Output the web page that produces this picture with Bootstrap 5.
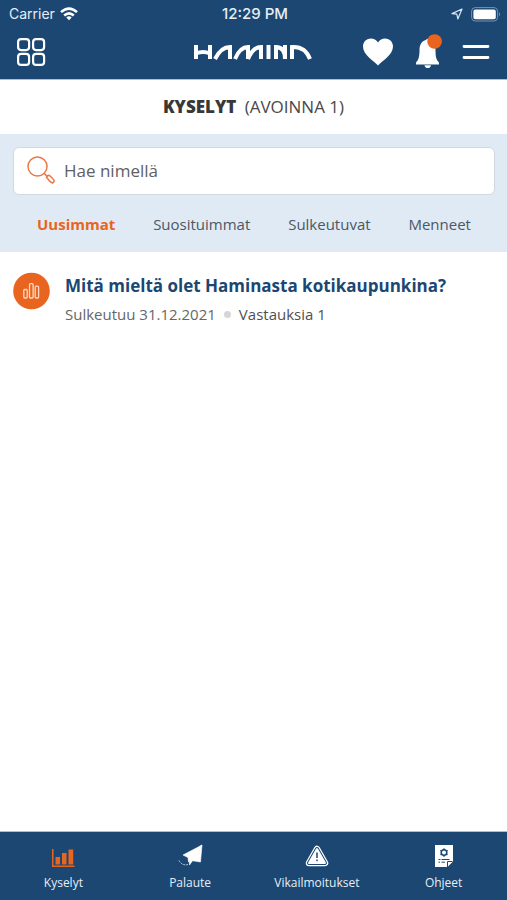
<!DOCTYPE html>
<html lang="fi">
<head>
<meta charset="utf-8">
<meta name="viewport" content="width=device-width, initial-scale=1">
<title>Kyselyt – Hamina</title>
<link href="https://cdn.jsdelivr.net/npm/bootstrap@5.3.0/dist/css/bootstrap.min.css" rel="stylesheet">
<style>
  :root { --navy: #1b4772; --accent: #e8641f; --pale: #e0eaf4; }
  body { font-family: "Open Sans", "Noto Sans", sans-serif; color: #444; }
  svg { display: block; }
  .app-head, .app-tabs { background: var(--navy); color: #fff; }
  .app-head { border-bottom: 1px solid #a9c0d8; }
  .status { font: 14px/20px Inter, Roboto, sans-serif; padding: 4px 6px 0 9px; color: #e6eef6; }
  .status .clock { font-size: 15px; font-weight: 500; }
  .side { flex: 1 1 0; }
  .brandbar { height: 55px; padding: 0 17px 0 16px; }
  .tools { gap: 20px; }
  .page-title { font-size: 17px; line-height: 24px; padding: 15px 0 15px; margin: 0; font-weight: 400; color: #484848; }
  .page-title strong { font-weight: 800; color: #383838; margin-right: 4px; }
  .filters { background: var(--pale); padding: 13px 12px 15px 13px; }
  .search { background: #fff; border: 1px solid #d3d8de; border-radius: 6px; height: 48px; padding: 0 12px; }
  .search input { font-size: 17px; line-height: 24px; color: #555; }
  .search input::placeholder { color: #606060; opacity: 1; }
  .sorts { margin-top: 16px; padding: 0 24px; }
  .sorts button { font-size: 15px; line-height: 26px; color: #4b5765; }
  .sorts .active { color: var(--accent); font-weight: 700; }
  .survey { padding: 20px 13px; gap: 15px; }
  .survey h2 { font-size: 17px; line-height: 28px; margin: 0 0 2px; font-weight: 700; }
  .survey h2 a { color: var(--navy); }
  .meta { font-size: 15px; line-height: 24px; gap: 8px; color: #666; }
  .meta .count { color: #505050; }
  .sep { width: 7px; height: 7px; border-radius: 50%; background: #d6d6d6; }
  .app-tabs { border-top: 1px solid #a9c0d8; padding: 11px 0 7px; }
  .app-tabs a { font-size: 12px; line-height: 20px; color: #e6eef6; gap: 4px; }
</style>
</head>
<body class="min-vh-100 d-flex flex-column bg-white">
<header class="app-head">
  <div class="status d-flex align-items-center">
    <div class="side d-flex align-items-center gap-1">
      <span>Carrier</span>
      <svg width="20" height="16" viewBox="0 0 20 16" fill="none" stroke="#fff" stroke-width="2.6" aria-hidden="true"><path d="M2 6.1Q10-1 18 6.1M5.2 9.5Q10 5.1 14.8 9.5"/><path d="M7.3 11.5Q10 9.2 12.7 11.5L10 14.2Z" fill="#fff" stroke="none"/></svg>
    </div>
    <span class="clock">12:29 PM</span>
    <div class="side d-flex align-items-center justify-content-end gap-2">
      <svg width="12" height="12" viewBox="0 0 12 12" fill="none" stroke="#dce8f4" stroke-width="1.2" stroke-linejoin="round" aria-hidden="true"><path d="M11 1L1 5.6L5.8 6.2L6.8 11Z"/></svg>
      <svg width="30" height="15" viewBox="0 0 30 15" aria-hidden="true"><rect x=".6" y=".6" width="26" height="13.4" rx="3.6" fill="none" stroke="#7893af"/><rect x="2.4" y="2.4" width="22.4" height="9.8" rx="2" fill="#fff"/><path d="M28 5q2 2.3 0 4.6Z" fill="#7893af"/></svg>
    </div>
  </div>
  <div class="brandbar d-flex align-items-center">
    <div class="side">
      <button class="btn p-0 border-0" type="button" aria-label="Palvelut">
        <svg width="30" height="30" viewBox="0 0 30 30" fill="none" stroke="#fff" stroke-width="2.2"><rect x="2.1" y="2.1" width="11" height="11" rx="3"/><rect x="17.1" y="2.1" width="11" height="11" rx="3"/><rect x="2.1" y="16.9" width="11" height="11" rx="3"/><rect x="17.1" y="16.9" width="11" height="11" rx="3"/></svg>
      </button>
    </div>
    <a href="#" aria-label="Hamina">
      <svg width="120" height="16" viewBox="0 0 120 16" fill="none" stroke="#fff" stroke-width="4"><path d="M3 1V15M17 1V15M3 9.500Q10 6.500 17 9.500M22 15Q28 3 37 3V15M42 15Q47 3 55 3V15M55 15Q60 3 68 3V15M75.500 1V15M83 15V3Q92 3 92 15V1M99 15V3Q112 2 117 15"/></svg>
    </a>
    <div class="tools side d-flex align-items-center justify-content-end">
      <button class="btn p-0 border-0" type="button" aria-label="Suosikit">
        <svg width="32" height="28" viewBox="0 0 32 28" fill="#fff"><path d="M16 27.5C12 23 1 17 1 8.500C1 0 12-2.500 16 4.600C20-2.500 31 0 31 8.500C31 17 20 23 16 27.500Z"/></svg>
      </button>
      <button class="btn p-0 border-0" type="button" aria-label="Ilmoitukset">
        <svg width="28" height="36" viewBox="0 0 28 36" fill="#fff"><path d="M12 6q1.500-2.500 3 0C20 7 21.500 11 21.500 16C21.500 24 22.500 26 25 28.500V30.500H2V28.500C4.500 26 5.500 23 5.500 16C5.500 11 7.500 7 12 6Z"/><path d="M10.500 31.200h6.500q-.5 2.800-3.250 2.800t-3.250-2.800Z"/><circle cx="20.600" cy="6.500" r="7.300" fill="#e8641f" transform="translate(0 1)"/></svg>
      </button>
      <button class="btn p-0 border-0" type="button" aria-label="Valikko">
        <svg width="28" height="16" viewBox="0 0 28 16" stroke="#fff" stroke-width="2.800" stroke-linecap="round"><path d="M2 2.500H26M2 13.500H26"/></svg>
      </button>
    </div>
  </div>
</header>
<main class="flex-grow-1">
  <h1 class="page-title text-center"><strong>KYSELYT</strong> (AVOINNA 1)</h1>
  <section class="filters">
    <div class="search d-flex align-items-center">
      <label for="q" aria-label="Haku"><svg width="30" height="30" viewBox="0 0 30 30" fill="none" stroke="#ea7945" stroke-width="1.500"><circle cx="11.500" cy="10.500" r="9.500"/><path d="M18 17.200L21.200 20.400M20.500 21.300L22.500 19.300Q24 19.300 28 24.200Q28.500 26 26.500 27Q24 26 20.500 21.300Z"/></svg></label>
      <input id="q" class="form-control border-0 bg-transparent shadow-none p-0 ms-2" type="text" placeholder="Hae nimellä">
    </div>
    <div class="sorts d-flex justify-content-between">
      <button class="btn p-0 border-0 active" type="button">Uusimmat</button>
      <button class="btn p-0 border-0" type="button">Suosituimmat</button>
      <button class="btn p-0 border-0" type="button">Sulkeutuvat</button>
      <button class="btn p-0 border-0" type="button">Menneet</button>
    </div>
  </section>
  <article class="survey d-flex align-items-start">
    <svg class="flex-shrink-0" width="37" height="38" viewBox="0 0 37 38" aria-hidden="true"><circle cx="18.500" cy="19" r="18.300" fill="#e8641f"/><g fill="none" stroke="#fbd9c6" stroke-width="1.300"><rect x="10.800" y="17.500" width="3.400" height="8.500" rx="1"/><rect x="16.500" y="11.700" width="3.600" height="14.300" rx="1"/><rect x="22.200" y="14.200" width="3.400" height="11.800" rx="1"/></g></svg>
    <div>
      <h2><a class="text-decoration-none" href="#">Mitä mieltä olet Haminasta kotikaupunkina?</a></h2>
      <div class="meta d-flex align-items-center"><span>Sulkeutuu 31.12.2021</span><span class="sep"></span><span class="count">Vastauksia 1</span></div>
    </div>
  </article>
</main>
<nav class="app-tabs row g-0">
  <a class="col d-flex flex-column align-items-center text-decoration-none" href="#">
    <svg width="24" height="26" viewBox="0 0 24 26" fill="#e8641f"><path d="M1 6h1.500v16.500H23.500v1.500H1ZM4.500 14h4.500v7.500H4.500ZM11 10h4.500v11.500h-4.500ZM17.500 6.500h4.700v15h-4.700Z"/></svg>
    Kyselyt</a>
  <a class="col d-flex flex-column align-items-center text-decoration-none" href="#">
    <svg width="26" height="26" viewBox="0 0 26 26"><path d="M25 2L6 12L11 14.600Z M25 2L12 15.300L12.500 22L15.500 17.800L23.500 19Z M25 2L11 14.600L11.500 19L12 15.300Z" fill="#fff" stroke="#fff" stroke-width=".6"/><path d="M2 17.500Q5 23 11 21.500" fill="none" stroke="#c5d5e4" stroke-dasharray="2 1"/></svg>
    Palaute</a>
  <a class="col d-flex flex-column align-items-center text-decoration-none" href="#">
    <svg width="24" height="26" viewBox="0 0 24 26"><path d="M12 6L20 20H4Z" fill="none" stroke="#fff" stroke-width="6.500" stroke-linejoin="round"/><path d="M12 6L20 20H4Z" fill="#fff" stroke="#1b4772" stroke-width="4" stroke-linejoin="round"/><path d="M12 6L20 20H4Z" fill="#fff" stroke="#fff" stroke-width="2" stroke-linejoin="round"/><path d="M12 9.500V15M12 16.500v1.800" stroke="#1b4772" stroke-width="1.500"/></svg>
    Vikailmoitukset</a>
  <a class="col d-flex flex-column align-items-center text-decoration-none" href="#">
    <svg width="20" height="26" viewBox="0 0 20 26"><path d="M1 2H19V18.500L13.500 24H1Z" fill="#fff"/><circle cx="10" cy="9.500" r="2.800" fill="none" stroke="#1b4772" stroke-width="1.600"/><path d="M10 5.200v2M10 12v2M6.300 7.400l1.600 1M12.100 10.700l1.600 1M6.300 11.700l1.600-1M12.100 8.400l1.600-1M4.500 16.500h2M7.500 16.500h8M4.500 19.200h1.500M7.500 19.200h3.500M13.500 24V18.500h5" fill="none" stroke="#1b4772"/></svg>
    Ohjeet</a>
</nav>
<script src="https://cdn.jsdelivr.net/npm/bootstrap@5.3.0/dist/js/bootstrap.bundle.min.js"></script>
</body>
</html>
